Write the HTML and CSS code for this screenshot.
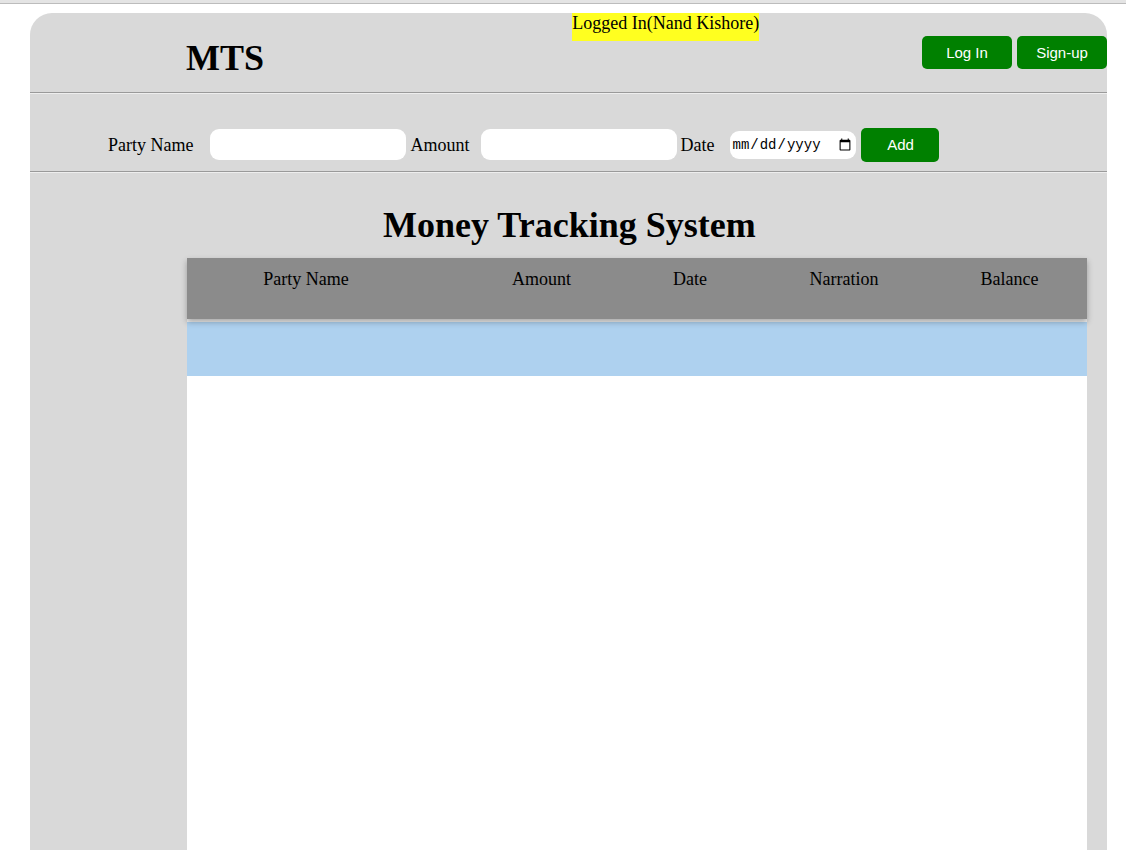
FILE: index.html
```html
<!DOCTYPE html>
<html lang="en">
<head>
<meta charset="utf-8">
<title>Money Tracking System</title>
<link rel="stylesheet" href="styles.css">
</head>
<body>
<div class="top-strip"></div>
<div class="container">
  <header class="header">
    <h1 class="brand">MTS</h1>
    <div class="status">Logged In(Nand Kishore)</div>
    <nav class="account">
      <button class="btn" type="button">Log In</button>
      <button class="btn" type="button">Sign-up</button>
    </nav>
  </header>
  <form class="entry">
    <label class="label-party" for="party">Party Name</label>
    <input class="text-input" id="party" type="text">
    <label class="label-amount" for="amount">Amount</label>
    <input class="text-input" id="amount" type="text">
    <label class="label-date" for="date">Date</label>
    <input class="date-input" id="date" type="date">
    <button class="btn btn-add" type="button">Add</button>
  </form>
  <main class="main">
    <h2 class="title">Money Tracking System</h2>
    <div class="panel">
      <table class="ledger">
        <colgroup>
          <col class="col-party"><col class="col-amount"><col class="col-date"><col class="col-narration"><col class="col-balance">
        </colgroup>
        <thead>
          <tr><th class="party-head">Party Name</th><th>Amount</th><th>Date</th><th>Narration</th><th>Balance</th></tr>
        </thead>
        <tbody>
          <tr><td></td><td></td><td></td><td></td><td></td></tr>
        </tbody>
      </table>
    </div>
  </main>
</div>
</body>
</html>
```
FILE: styles.css
```css
* { box-sizing: border-box; }
body {
  margin: 0;
  min-height: 100vh;
  display: flex;
  flex-direction: column;
  background: #fff;
  color: #000;
  font: 18px/20px "Liberation Serif", "Times New Roman", serif;
}
.top-strip {
  height: 4px;
  background: #e4e4e4;
  border-bottom: 1px solid #bcbcbc;
}
.container {
  flex: 1;
  display: flex;
  flex-direction: column;
  margin: 9px 19px 0 30px;
  background: #d9d9d9;
  border-radius: 22px 22px 0 0;
}
.header {
  display: grid;
  grid-template-columns: 10fr auto 9fr;
  align-items: start;
  height: 81px;
  padding-left: 156px;
  border-bottom: 1px solid #eee;
  box-shadow: inset 0 -1px #9a9a9a;
}
.brand {
  margin: 24px 0 0;
  font-size: 36px;
  line-height: 42px;
}
.status {
  height: 28px;
  background: #ffff20;
}
.account {
  display: flex;
  justify-content: flex-end;
  gap: 5px;
  margin-top: 23px;
}
.btn {
  width: 90px;
  height: 33px;
  padding: 0;
  border: 0;
  border-radius: 5px;
  background: #008000;
  color: #fff;
  font: 15px "Liberation Sans", Arial, sans-serif;
}
.entry {
  display: flex;
  align-items: center;
  height: 79px;
  padding: 23px 0 0 78px;
  border-bottom: 1px solid #eee;
  box-shadow: inset 0 -1px #9a9a9a;
}
.label-party { margin-right: 17px; }
.label-amount { margin: 0 11px 0 4px; }
.label-date { margin: 0 16px 0 4px; }
.text-input {
  width: 196px;
  height: 31px;
  border: 0;
  border-radius: 9px;
  background: #fff;
}
.date-input {
  width: 126px;
  height: 28px;
  padding: 0 2px 0 1px;
  border: 0;
  border-radius: 9px;
  background: #fff;
  color: #000;
  font: 14px "Liberation Mono", monospace;
}
.btn-add {
  width: 78px;
  height: 34px;
  margin-left: 5px;
}
.main {
  flex: 1;
  display: flex;
  flex-direction: column;
  padding: 31px 20px 0 157px;
}
.title {
  margin: 0 0 12px 196px;
  font-size: 36px;
  line-height: 42px;
}
.panel {
  flex: 1;
  background: #fff;
}
.ledger {
  width: 100%;
  table-layout: fixed;
  border-spacing: 0;
}
.col-party { width: 30.2%; }
.col-amount { width: 18.4%; }
.col-date { width: 14.6%; }
.col-narration { width: 19.6%; }
.col-balance { width: 17.2%; }
.ledger thead {
  position: relative;
  z-index: 1;
  box-shadow: 0 3px 6px rgba(0, 0, 0, 0.3);
}
.ledger th {
  height: 61px;
  padding: 11px 0 0;
  background: #8b8b8b;
  font-weight: normal;
  text-align: center;
  vertical-align: top;
}
.ledger .party-head { padding-right: 34px; }
.ledger td {
  height: 57px;
  padding: 0;
  border-top: 3px solid #f0f0f0;
  background: #aed1ef;
}
```
